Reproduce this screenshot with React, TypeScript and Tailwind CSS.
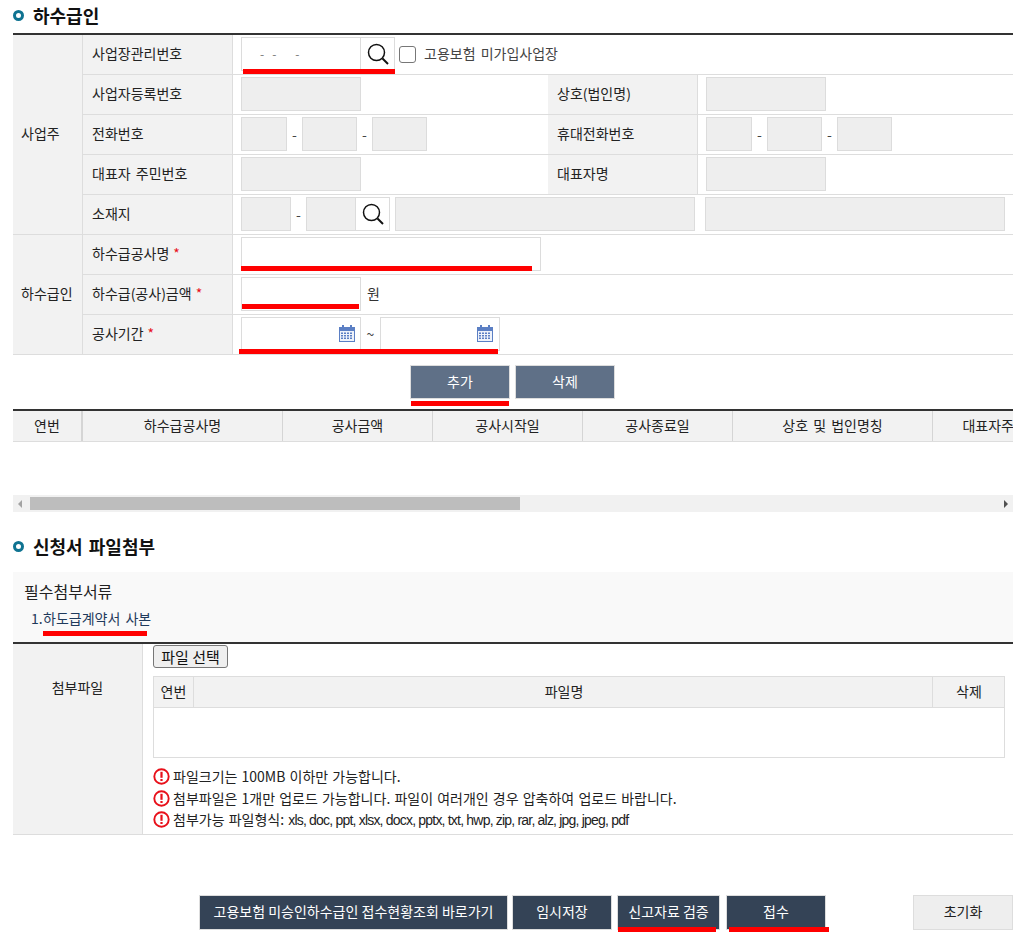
import React from 'react';

const SearchIcon: React.FC = () => (
    <svg width="24" height="24" viewBox="0 0 24 24" fill="none" stroke="#111" strokeWidth="1.5">
        <circle cx="10.5" cy="10.5" r="8" />
        <path d="M16.5 16.5 L22 22" strokeWidth="2" />
    </svg>
);

const CalendarIcon: React.FC = () => (
    <svg width="16" height="17" viewBox="0 0 16 17">
        <rect x="0.5" y="2.5" width="15" height="14" fill="#eef2fa" stroke="#5b7fc4" />
        <rect x="0" y="2" width="16" height="4" fill="#5b7fc4" />
        <rect x="3" y="0" width="2" height="4" fill="#5b7fc4" />
        <rect x="11" y="0" width="2" height="4" fill="#5b7fc4" />
        {[2, 5, 8, 11].map((x) =>
            [7.5, 10, 12.5].map((y) => <rect key={`${x}-${y}`} x={x} y={y} width="2" height="1.5" fill="#5b7fc4" />)
        )}
    </svg>
);

const AlertIcon: React.FC = () => (
    <svg width="17" height="17" viewBox="0 0 17 17" className="shrink-0">
        <circle cx="8.5" cy="8.5" r="7.2" fill="#fff" stroke="#e8101a" strokeWidth="1.9" />
        <rect x="7.4" y="3.8" width="2.2" height="6" fill="#e8101a" />
        <rect x="7.4" y="11" width="2.2" height="2" fill="#e8101a" />
    </svg>
);

const Dot: React.FC = () => <span className="inline-block w-[11px] h-[11px] rounded-full border-[3px] border-[#0f7391] bg-white shrink-0" />;

const RedLine: React.FC<{ className: string }> = ({ className }) => <span className={`absolute bg-[#ff0000] ${className}`} />;

const Box: React.FC<{ className: string; children?: React.ReactNode }> = ({ className, children }) => (
    <div className={`h-[34px] border border-[#dcdcdc] shrink-0 ${className}`}>{children}</div>
);

const Grey: React.FC<{ w: string }> = ({ w }) => <Box className={`bg-[#eeeeee] ${w}`} />;

const Th: React.FC<{ children: React.ReactNode; rowSpan?: number; pad?: string }> = ({ children, rowSpan, pad = 'pl-[9px]' }) => (
    <th rowSpan={rowSpan} className={`h-10 bg-[#f2f2f2] border-b border-r border-[#dddddd] text-left font-normal whitespace-nowrap pb-[2px] text-[14px] text-[#222] ${pad}`}>{children}</th>
);

const Td: React.FC<{ children?: React.ReactNode; colSpan?: number }> = ({ children, colSpan }) => (
    <td colSpan={colSpan} className="h-10 border-b border-[#dddddd] pl-[8px] align-top">
        <div className="flex items-center h-[38px]">{children}</div>
    </td>
);

const Req: React.FC = () => <span className="text-[#e8101a] ml-1">*</span>;

const Dash: React.FC<{ w: string }> = ({ w }) => <span className={`text-center text-[#444] ${w}`}>-</span>;

const SearchButton: React.FC = () => (
    <div className="w-[34px] h-[34px] border border-l-0 border-[#dcdcdc] bg-white flex items-center justify-center shrink-0">
        <SearchIcon />
    </div>
);

const headers: { label: string; w: string }[] = [
    { label: '연번', w: 'w-[70px] border-r-2' },
    { label: '하수급공사명', w: 'w-[200px]' },
    { label: '공사금액', w: 'w-[150px]' },
    { label: '공사시작일', w: 'w-[150px]' },
    { label: '공사종료일', w: 'w-[150px]' },
    { label: '상호 및 법인명칭', w: 'w-[200px]' },
    { label: '대표자주민번호', w: 'w-[150px]' },
];

const App: React.FC = () => {
    return (
        <div className="w-[1036px] h-[938px] bg-white overflow-hidden pl-[13px] pr-[23px] text-[14px] text-[#222] [word-spacing:2px] font-['Noto_Sans_CJK_KR','Noto_Sans',sans-serif]">
            <h2 className="flex items-center gap-[9px] h-[33px] pb-[2px] text-[18px] font-semibold text-[#111]">
                <Dot />
                하수급인
            </h2>

            <table className="w-[1000px] table-fixed border-separate border-spacing-0 border-t-2 border-[#333]">
                <colgroup>
                    <col className="w-[70px]" />
                    <col className="w-[150px]" />
                    <col className="w-[315px]" />
                    <col className="w-[150px]" />
                    <col className="w-[315px]" />
                </colgroup>
                <tbody>
                    <tr>
                        <Th rowSpan={5} pad="pl-[8px]">사업주</Th>
                        <Th>사업장관리번호</Th>
                        <Td colSpan={3}>
                            <div className="relative flex">
                                <Box className="w-[120px] bg-white flex items-center pl-[18px] text-[12px] text-[#777] whitespace-pre [word-spacing:0px]">{'-   -       -'}</Box>
                                <SearchButton />
                                <RedLine className="left-[2px] right-0 top-[32px] h-[5px]" />
                            </div>
                            <span className="w-[17px] h-[17px] border border-[#777] rounded-[3px] ml-[4px] mr-[8px] bg-white" />
                            <span className="text-[14px] text-[#444] mb-[1px]">고용보험 미가입사업장</span>
                        </Td>
                    </tr>
                    <tr>
                        <Th>사업자등록번호</Th>
                        <Td><Grey w="w-[120px]" /></Td>
                        <Th>상호(법인명)</Th>
                        <Td><Grey w="w-[120px]" /></Td>
                    </tr>
                    <tr>
                        <Th>전화번호</Th>
                        <Td>
                            <Grey w="w-[46px]" /><Dash w="w-[15px]" /><Grey w="w-[55px]" /><Dash w="w-[15px]" /><Grey w="w-[55px]" />
                        </Td>
                        <Th>휴대전화번호</Th>
                        <Td>
                            <Grey w="w-[46px]" /><Dash w="w-[15px]" /><Grey w="w-[55px]" /><Dash w="w-[15px]" /><Grey w="w-[55px]" />
                        </Td>
                    </tr>
                    <tr>
                        <Th>대표자 주민번호</Th>
                        <Td><Grey w="w-[120px]" /></Td>
                        <Th>대표자명</Th>
                        <Td><Grey w="w-[120px]" /></Td>
                    </tr>
                    <tr>
                        <Th>소재지</Th>
                        <Td colSpan={3}>
                            <Grey w="w-[50px]" /><Dash w="w-[15px]" /><Grey w="w-[50px]" />
                            <SearchButton />
                            <Grey w="w-[300px] ml-[5px]" />
                            <Grey w="w-[300px] ml-[10px]" />
                        </Td>
                    </tr>
                    <tr>
                        <Th rowSpan={3} pad="pl-[8px]">하수급인</Th>
                        <Th>하수급공사명<Req /></Th>
                        <Td colSpan={3}>
                            <div className="relative">
                                <Box className="w-[300px] bg-white" />
                                <RedLine className="left-0 w-[291px] top-[29px] h-[5px]" />
                            </div>
                        </Td>
                    </tr>
                    <tr>
                        <Th>하수급(공사)금액<Req /></Th>
                        <Td colSpan={3}>
                            <div className="relative">
                                <Box className="w-[120px] bg-white" />
                                <RedLine className="left-[1px] w-[117px] top-[27px] h-[5px]" />
                            </div>
                            <span className="ml-[6px] mb-[2px] text-[#333]">원</span>
                        </Td>
                    </tr>
                    <tr>
                        <Th>공사기간<Req /></Th>
                        <Td colSpan={3}>
                            <div className="relative flex items-center">
                                <Box className="w-[120px] bg-white flex items-center justify-end pr-[5px] pb-[1px]"><CalendarIcon /></Box>
                                <span className="w-[19px] text-center text-[#444]">~</span>
                                <Box className="w-[120px] bg-white flex items-center justify-end pr-[6px] pb-[1px]"><CalendarIcon /></Box>
                                <RedLine className="-left-[2px] w-[259px] top-[32px] h-[5px]" />
                            </div>
                        </Td>
                    </tr>
                </tbody>
            </table>

            <div className="flex justify-center gap-[5px] mt-[10px] w-[1000px] pr-[1px]">
                <div className="relative">
                    <button className="w-[100px] h-[34px] pb-[2px] bg-[#5f7087] border border-[#dddddd] text-white text-[14px]">추가</button>
                    <RedLine className="left-[1px] w-[98px] top-[36px] h-[5px]" />
                </div>
                <button className="w-[100px] h-[34px] pb-[2px] bg-[#5f7087] border border-[#dddddd] text-white text-[14px]">삭제</button>
            </div>

            <div className="w-[1000px] mt-[10px] overflow-hidden">
                <div className="flex w-[1200px] h-[33px] border-t-2 border-[#333] border-b border-b-[#dddddd] bg-[#f2f2f2]">
                    {headers.map((h) => (
                        <div key={h.label} className={`${h.w} shrink-0 flex items-center justify-center border-r border-[#d5d5d5] pb-[2px] text-[14px] whitespace-nowrap`}>{h.label}</div>
                    ))}
                </div>
                <div className="h-[53px]" />
                <div className="relative flex items-center h-[17px] bg-[#f1f1f1]">
                    <span className="absolute left-[5px] w-0 h-0 border-y-[4px] border-y-transparent border-r-[4px] border-r-[#a3a3a3]" />
                    <span className="ml-[17px] w-[490px] h-[13px] bg-[#bdbdbd]" />
                    <span className="absolute right-[5px] w-0 h-0 border-y-[4px] border-y-transparent border-l-[4px] border-l-[#505050]" />
                </div>
            </div>

            <h2 className="flex items-center gap-[9px] mt-[19px] h-8 pb-[2px] text-[18px] font-semibold text-[#111]">
                <Dot />
                신청서 파일첨부
            </h2>

            <div className="w-[1000px] mt-[9px] h-[70px] bg-[#f9f9f9] pl-[11px] pt-[7px]">
                <p className="text-[16px] leading-[24px] text-[#222]">필수첨부서류</p>
                <div className="relative flex w-fit mt-[4px] ml-[7px] text-[14px] leading-[22px] text-[#1f3a5c]">
                    <span className="w-[12px]">1.</span>
                    <span>하도급계약서 사본</span>
                    <RedLine className="left-[12px] w-[104px] top-[24px] h-[5px]" />
                </div>
            </div>

            <div className="w-[1000px] flex border-t-2 border-[#333] border-b border-b-[#dddddd] h-[193px]">
                <div className="w-[130px] bg-[#f2f2f2] border-r border-[#dddddd] flex items-start justify-center pt-[33px] shrink-0">첨부파일</div>
                <div className="pl-[10px] flex-1">
                    <button className="block w-[75px] h-[23px] mt-[1px] border border-[#777] rounded-[3px] bg-[#efefef] text-[15px] leading-none text-[#111]">파일 선택</button>
                    <div className="w-[852px] mt-[8px] border border-[#dddddd]">
                        <div className="flex h-[31px] bg-[#f2f2f2] border-b border-[#dddddd]">
                            <div className="w-[40px] flex items-center justify-center border-r border-[#dddddd] pb-[1px]">연번</div>
                            <div className="flex-1 flex items-center justify-center border-r border-[#dddddd] pl-[2px] pb-[1px]">파일명</div>
                            <div className="w-[71px] flex items-center justify-center pl-[1px] pb-[1px]">삭제</div>
                        </div>
                        <div className="h-[49px]" />
                    </div>
                    <ul className="mt-[8px] [word-spacing:1px]">
                        <li className="flex items-center gap-[3px] h-[21.5px] whitespace-nowrap text-[#222]">
                            <AlertIcon />
                            파일크기는 100MB 이하만 가능합니다.
                        </li>
                        <li className="flex items-center gap-[3px] h-[21.5px] whitespace-nowrap text-[#222]">
                            <AlertIcon />
                            첨부파일은 1개만 업로드 가능합니다. 파일이 여러개인 경우 압축하여 업로드 바랍니다.
                        </li>
                        <li className="flex items-center gap-[3px] h-[21.5px] whitespace-pre text-[#222]">
                            <AlertIcon />
                            <span>
                                첨부가능 파일형식:{' '}
                                <span className="font-['Liberation_Sans',sans-serif] tracking-[-0.8px] [word-spacing:0px]">xls, doc, ppt, xlsx, docx, pptx, txt, hwp, zip, rar, alz, jpg, jpeg, pdf</span>
                            </span>
                        </li>
                    </ul>
                </div>
            </div>

            <div className="w-[1000px] flex mt-[60px] pl-[186px]">
                <button className="w-[309px] h-[35px] pb-[2px] bg-[#344356] border border-[#dddddd] text-white text-[14px] whitespace-nowrap">고용보험 미승인하수급인 접수현황조회 바로가기</button>
                <button className="w-[100px] h-[35px] pb-[2px] ml-[4px] bg-[#344356] border border-[#dddddd] text-white text-[14px]">임시저장</button>
                <div className="relative ml-[5px]">
                    <button className="w-[103px] h-[35px] pb-[2px] bg-[#344356] border border-[#dddddd] text-white text-[14px]">신고자료 검증</button>
                    <RedLine className="left-[1px] w-[98px] top-[32px] h-[5px]" />
                </div>
                <div className="relative ml-[6px]">
                    <button className="w-[100px] h-[35px] pb-[2px] bg-[#344356] border border-[#dddddd] text-white text-[14px]">접수</button>
                    <RedLine className="left-[3px] w-[100px] top-[32px] h-[5px]" />
                </div>
                <button className="w-[100px] h-[35px] pb-[2px] ml-auto bg-[#eeeeee] border border-[#dddddd] text-[#222] text-[14px]">초기화</button>
            </div>
        </div>
    );
};

export default App;
